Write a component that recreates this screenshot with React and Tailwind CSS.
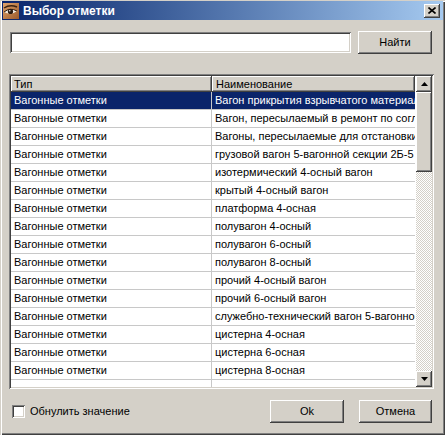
import React, { useState } from "react";

const RAISED =
  "shadow-[inset_-1px_-1px_0_#404040,inset_1px_1px_0_#ffffff,inset_-2px_-2px_0_#808080,inset_2px_2px_0_#d4d0c8]";
const SUNKEN =
  "shadow-[inset_1px_1px_0_#808080,inset_-1px_-1px_0_#ffffff,inset_2px_2px_0_#404040,inset_-2px_-2px_0_#d4d0c8]";

const rows = [
  "Вагон прикрытия взрывчатого материала",
  "Вагон, пересылаемый в ремонт по согласованию",
  "Вагоны, пересылаемые для отстановки",
  "грузовой вагон 5-вагонной секции 2Б-5",
  "изотермический 4-осный вагон",
  "крытый 4-осный вагон",
  "платформа 4-осная",
  "полувагон 4-осный",
  "полувагон 6-осный",
  "полувагон 8-осный",
  "прочий 4-осный вагон",
  "прочий 6-осный вагон",
  "служебно-технический вагон 5-вагонной секции",
  "цистерна 4-осная",
  "цистерна 6-осная",
  "цистерна 8-осная",
  "",
];

function EyeIcon() {
  return (
    <svg width="16" height="16" viewBox="0 0 16 16">
      <defs>
        <linearGradient id="skin" x1="0" y1="0" x2="1" y2="1">
          <stop offset="0" stopColor="#e0a36a" />
          <stop offset="1" stopColor="#9a5a2c" />
        </linearGradient>
      </defs>
      <rect width="16" height="16" fill="url(#skin)" />
      <path d="M1 5 Q7 1 14 4" stroke="#3a2210" strokeWidth="1.5" fill="none" />
      <path d="M1 9 Q7 4 14 8 Q8 13 1 9 Z" fill="#f4efe6" />
      <circle cx="7.5" cy="8.5" r="2.6" fill="#2a1a10" />
      <circle cx="6.8" cy="7.8" r="0.7" fill="#ffffff" />
      <path d="M1 9 Q7 4 14 8" stroke="#2a1a10" strokeWidth="1" fill="none" />
    </svg>
  );
}

function ScrollArrow({ down }) {
  return (
    <div className={`w-[16px] h-[16px] bg-[#d4d0c8] flex items-center justify-center ${RAISED}`}>
      <svg width="7" height="4" viewBox="0 0 7 4">
        <path d={down ? "M0 0 H7 L3.5 4 Z" : "M0 4 H7 L3.5 0 Z"} fill="#000" />
      </svg>
    </div>
  );
}

export default function App() {
  const [query, setQuery] = useState("");
  const [reset, setReset] = useState(false);

  return (
    <div className="w-[445px] h-[435px] bg-[#d4d0c8] flex flex-col overflow-hidden shadow-[inset_1px_1px_0_#d4d0c8,inset_2px_2px_0_#ffffff,inset_-1px_-1px_0_#404040,inset_-2px_-2px_0_#808080] font-['Liberation_Sans',Arial,sans-serif] text-[11px] text-black">
      {/* title bar */}
      <div className="mx-[2px] mt-[1px] h-[19px] flex items-center bg-gradient-to-r from-[#0a246a] to-[#a6caf0] pl-[1px]">
        <EyeIcon />
        <span className="ml-[4px] text-white font-bold text-[12px] leading-none">Выбор отметки</span>
        <div className={`ml-auto mr-[3px] w-[16px] h-[14px] bg-[#d4d0c8] flex items-center justify-center ${RAISED}`}>
          <svg width="8" height="7" viewBox="0 0 8 7">
            <path d="M0.5 0.5 L7.5 6.5 M7.5 0.5 L0.5 6.5" stroke="#000" strokeWidth="1.6" />
          </svg>
        </div>
      </div>

      {/* search */}
      <div className="mt-[11px] ml-[10px] h-[23px] flex items-center">
        <div className={`w-[341px] h-[21px] bg-white ${SUNKEN}`}>
          <input
            value={query}
            onChange={(e) => setQuery(e.target.value)}
            className="w-full h-full bg-transparent px-[4px] outline-none text-[11px]"
          />
        </div>
        <button className={`ml-[7px] w-[74px] h-[23px] bg-[#d4d0c8] text-[11px] ${RAISED}`}>Найти</button>
      </div>

      {/* list */}
      <div className={`mt-[20px] ml-[9px] w-[425px] h-[315px] bg-white p-[2px] flex ${SUNKEN}`}>
        <div className="w-[405px] h-full overflow-hidden">
          <div className="flex h-[16px]">
            <div className={`w-[201px] pl-[3px] bg-[#d4d0c8] flex items-center ${RAISED}`}>Тип</div>
            <div className={`w-[203px] pl-[4px] bg-[#d4d0c8] flex items-center ${RAISED}`}>Наименование</div>
          </div>
          {rows.map((name, i) => {
            const sel = i === 0;
            return (
              <div
                key={i}
                className={`flex h-[18px] border-b border-[#c8c8c8] whitespace-nowrap ${sel ? "bg-[#0a246a] text-white" : ""}`}
              >
                <div className="w-[201px] pl-[3px] flex items-center overflow-hidden border-r border-[#c8c8c8]">
                  {name ? "Вагонные отметки" : ""}
                </div>
                <div className="w-[203px] pl-[3px] flex items-center overflow-hidden">{name}</div>
              </div>
            );
          })}
        </div>
        <div className="w-[16px] h-full flex flex-col ml-[1px]">
          <ScrollArrow />
          <div className="flex-1 flex flex-col bg-[repeating-conic-gradient(#ffffff_0%_25%,#d4d0c8_0%_50%)] bg-[length:2px_2px]">
            <div className={`h-[80px] bg-[#d4d0c8] ${RAISED}`} />
          </div>
          <ScrollArrow down />
        </div>
      </div>

      {/* footer */}
      <div className="mt-[11px] h-[23px] flex items-center">
        <label className="ml-[12px] flex items-center">
          <span
            onClick={() => setReset((v) => !v)}
            className={`w-[13px] h-[13px] bg-white ${SUNKEN}`}
          />
          <span className="ml-[5px]">Обнулить значение</span>
        </label>
        <button className={`ml-auto w-[74px] h-[23px] bg-[#d4d0c8] ${RAISED}`}>Ok</button>
        <button className={`ml-[15px] mr-[13px] w-[73px] h-[23px] bg-[#d4d0c8] ${RAISED}`}>Отмена</button>
      </div>
    </div>
  );
}
